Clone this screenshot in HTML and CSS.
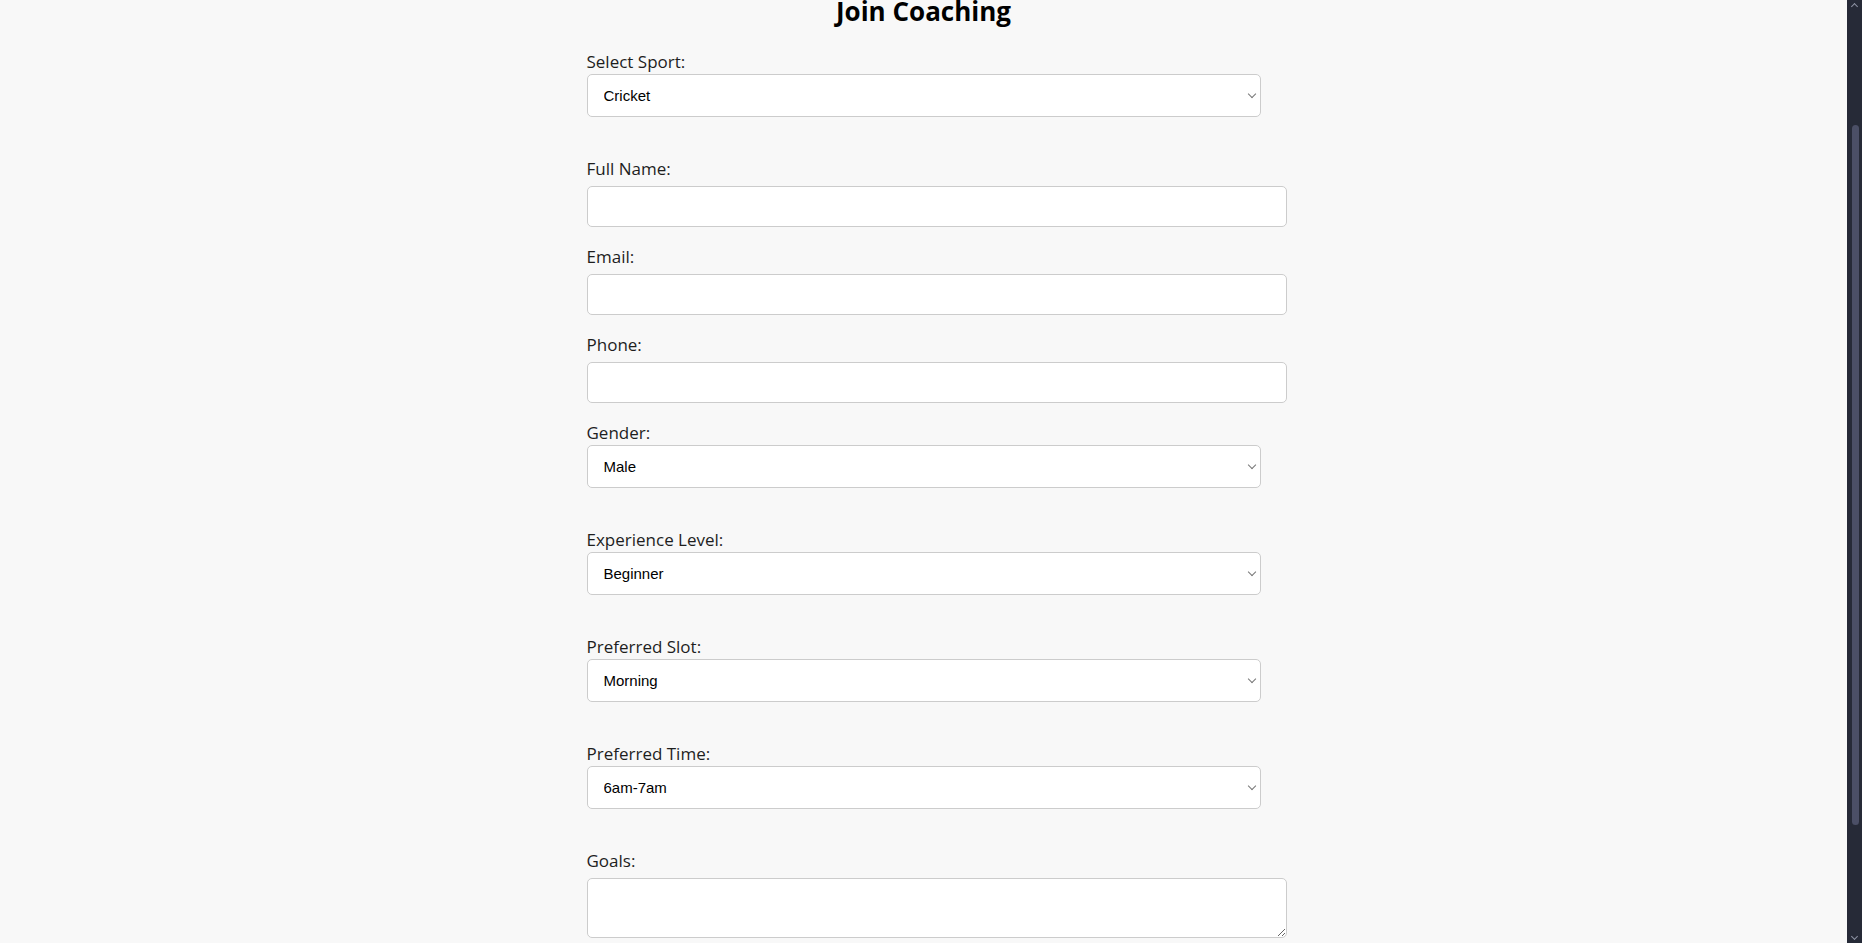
FILE: index.html
```html
<!DOCTYPE html>
<html lang="en">
<head>
    <meta charset="UTF-8">
    <meta name="viewport" content="width=device-width, initial-scale=1.0">
    <title>Join Coaching</title>
    <link rel="stylesheet" href="styles.css">
</head>
<body>
    <div class="container">
        <h2 class="title">Join Coaching</h2>
        <form id="coachingForm" action="#">
            <label for="sport">Select Sport:</label>
            <div class="select-wrap">
                <select id="sport" name="sport">
                    <option value="cricket">Cricket</option>
                    <option value="football">Football</option>
                    <option value="basketball">Basketball</option>
                    <option value="tennis">Tennis</option>
                    <option value="badminton">Badminton</option>
                </select>
            </div>

            <label for="full-name">Full Name:</label>
            <input type="text" id="full-name" name="full-name" required>

            <label for="email">Email:</label>
            <input type="email" id="email" name="email" required>

            <label for="phone">Phone:</label>
            <input type="tel" id="phone" name="phone" required>

            <label for="gender">Gender:</label>
            <div class="select-wrap">
                <select id="gender" name="gender">
                    <option value="male">Male</option>
                    <option value="female">Female</option>
                    <option value="other">Other</option>
                </select>
            </div>

            <label for="level">Experience Level:</label>
            <div class="select-wrap">
                <select id="level" name="level">
                    <option value="beginner">Beginner</option>
                    <option value="intermediate">Intermediate</option>
                    <option value="advanced">Advanced</option>
                </select>
            </div>

            <label for="slot">Preferred Slot:</label>
            <div class="select-wrap">
                <select id="slot" name="slot">
                    <option value="morning">Morning</option>
                    <option value="evening">Evening</option>
                </select>
            </div>

            <label for="time">Preferred Time:</label>
            <div class="select-wrap">
                <select id="time" name="time">
                    <option value="6-7">6am-7am</option>
                    <option value="7-8">7am-8am</option>
                    <option value="8-9">8am-9am</option>
                </select>
            </div>

            <label for="goals">Goals:</label>
            <textarea id="goals" name="goals"></textarea>
        </form>
    </div>

    <!-- window scrollbar (dark desktop theme) -->
    <div class="scrollbar" aria-hidden="true">
        <span class="scroll-arrow up"></span>
        <span class="scroll-thumb"></span>
        <span class="scroll-arrow down"></span>
    </div>
</body>
</html>
```

FILE: styles.css
```css
body {
    font-family: 'Segoe UI', 'Open Sans', sans-serif;
    background: #f8f8f8;
    color: #1e1e1e;
    margin: 0;
    padding: 0 15px 0 0;
}
.container {
    width: 674px;
    margin: 0 auto;
    padding-bottom: 40px;
}
.title {
    font-size: 26px;
    line-height: 22px;
    margin: 0 0 28px;
    text-align: center;
    color: #000;
}
label {
    display: block;
    font-size: 17px;
    line-height: 24px;
}
input[type="text"],
input[type="email"],
input[type="tel"],
textarea {
    display: block;
    width: 100%;
    padding: 12px;
    margin: 5px 0 18px;
    font: 13.33px 'Liberation Sans', Arial, sans-serif;
    border: 1px solid #ccc;
    border-radius: 5px;
    background-color: #fff;
}
textarea {
    height: 34px;
}
.select-wrap {
    position: relative;
    margin-bottom: 40px;
}
.select-wrap::after {
    content: "";
    position: absolute;
    right: 6px;
    top: 50%;
    width: 5px;
    height: 5px;
    margin-top: -5px;
    border-right: 1.5px solid #777;
    border-bottom: 1.5px solid #777;
    transform: rotate(45deg);
    pointer-events: none;
}
select {
    display: block;
    width: 100%;
    height: 43px;
    padding: 0 30px 0 16px;
    font: 15px 'Liberation Sans', Arial, sans-serif;
    color: #000;
    border: 1px solid #ccc;
    border-radius: 5px;
    background-color: #fff;
    -webkit-appearance: none;
    appearance: none;
}

.scrollbar {
    position: fixed;
    top: 0;
    right: 0;
    bottom: 0;
    width: 15px;
    background: #262a37;
}
.scroll-thumb {
    position: absolute;
    top: 125px;
    left: 5px;
    width: 7px;
    height: 700px;
    border-radius: 4px;
    background: #4b4f66;
}
.scroll-arrow {
    position: absolute;
    left: 5px;
    width: 4px;
    height: 4px;
    border-left: 1.5px solid #8e92a3;
    border-top: 1.5px solid #8e92a3;
}
.scroll-arrow.up {
    top: 4px;
    transform: rotate(45deg);
}
.scroll-arrow.down {
    bottom: 4px;
    transform: rotate(225deg);
}
```
